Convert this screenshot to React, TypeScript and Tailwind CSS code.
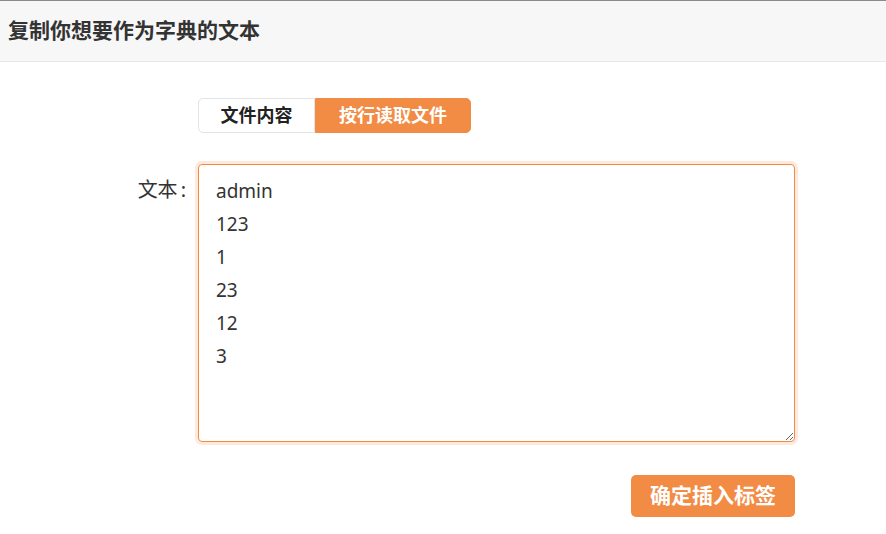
import { useState } from 'react'

const font = { fontFamily: '"Noto Sans", "Noto Sans CJK SC", sans-serif' }

export default function App() {
	const [mode, setMode] = useState<'content' | 'lines'>('lines')
	const [text, setText] = useState('admin\n123\n1\n23\n12\n3')

	return (
		<div className="w-[886px] h-[534px] bg-white text-[#333]" style={font}>
			<div className="h-[62px] border-t border-[#8a8a8a] border-b border-b-[#e8e8e8] bg-[#f7f7f7] flex items-center px-2">
				<h2 className="text-[21px] font-bold text-[#333]">复制你想要作为字典的文本</h2>
			</div>

			<div className="pl-[198px] pt-[36px]">
				<div className="flex w-[273px] h-[35px] text-[18px] font-bold">
					<button
						onClick={() => setMode('content')}
						className={`w-[117px] rounded-l-[5px] border ${
							mode === 'content'
								? 'bg-[#f28b44] text-white border-[#f28b44]'
								: 'bg-white text-[#222] border-[#e3e3ea]'
						}`}>
						文件内容
					</button>
					<button
						onClick={() => setMode('lines')}
						className={`flex-1 rounded-r-[5px] border ${
							mode === 'lines'
								? 'bg-[#f28b44] text-white border-[#f28b44]'
								: 'bg-white text-[#222] border-[#e3e3ea]'
						}`}>
						按行读取文件
					</button>
				</div>
			</div>

			<div className="flex pt-[31px]">
				<label className="w-[198px] pr-[12px] text-right text-[20px] leading-[33px] pt-[9px] text-[#333]">
					文本<span className="ml-[3px]">:</span>
				</label>
				<textarea
					value={text}
					onChange={(e) => setText(e.target.value)}
					className="w-[597px] h-[278px] rounded-[4px] border border-[#f28b44] shadow-[0_0_0_3px_rgba(242,139,68,0.18)] px-[17px] pt-[10px] pb-[8px] text-[19px] leading-[33px] text-[#333] outline-none"
					style={font}
				/>
			</div>

			<div className="flex justify-end w-[795px] pt-[33px]">
				<button className="w-[164px] h-[42px] rounded-[5px] bg-[#f28b44] text-white text-[21px] font-bold">
					确定插入标签
				</button>
			</div>
		</div>
	)
}
